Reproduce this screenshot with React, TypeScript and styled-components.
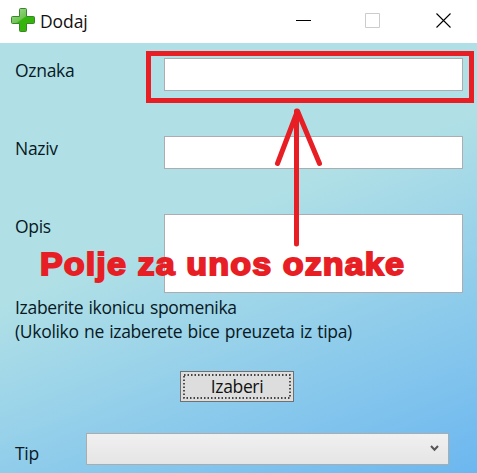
import React from "react";
import styled, { createGlobalStyle } from "styled-components";

const Global = createGlobalStyle`
  body { margin: 0; overflow: hidden; }
  * { box-sizing: border-box; }
`;
const Window = styled.div`
  position: relative;
  width: 477px;
  height: 473px;
  display: flex;
  flex-direction: column;
  overflow: hidden;
  background: #fff;
  font-family: "Open Sans", "Noto Sans", sans-serif;
  font-size: 17.5px;
  line-height: 24px;
  color: #08191f;
`;
const TitleBar = styled.header`
  display: flex;
  align-items: center;
  height: 43px;
  flex: none;
  padding: 0 26px 3px 10px;
  background: #fff;
`;
const Title = styled.h1`
  margin: 2px 0 0 4px;
  flex: 1;
  font-size: 17.5px;
  font-weight: 400;
  letter-spacing: -0.1px;
  color: #111;
`;
const Controls = styled.div`
  display: flex;
  gap: 54px;
`;
const Form = styled.main`
  flex: 1;
  display: flex;
  flex-direction: column;
  padding: 15px 14px 0 15px;
  background: linear-gradient(158deg, #b0e0e6 0%, #b0e0e6 42%, #6cb7f0 100%);
`;
const Row = styled.label<{ $h: number }>`
  display: flex;
  height: ${(p) => p.$h}px;
  flex: none;
`;
const Label = styled.span<{ $w: number }>`
  width: ${(p) => p.$w}px;
  letter-spacing: -0.3px;
`;
const Input = styled.input`
  width: 299px;
  height: 33px;
  border: 1px solid #abadb3;
  background: #fff;
`;
const TextArea = styled.textarea`
  width: 299px;
  height: 79px;
  border: 1px solid #abadb3;
  background: #fff;
  resize: none;
`;
const Hint = styled.p`
  margin: 0;
  height: 76px;
  letter-spacing: -0.31px;
  word-spacing: 1px;
  white-space: nowrap;
`;
const Button = styled.button`
  position: relative;
  width: 114px;
  height: 31px;
  margin-left: 165px;
  padding: 0 0 1px;
  border: 1px solid #707070;
  background: #ddd;
  font: inherit;
  color: #111;
  letter-spacing: -0.35px;
`;
const FocusRing = styled.svg`
  position: absolute;
  inset: 0;
`;
const TypeRow = styled.div`
  display: flex;
  margin-top: 31px;
`;
const Select = styled.div`
  display: flex;
  align-items: center;
  justify-content: flex-end;
  width: 363px;
  height: 32px;
  padding: 0 9px 2px 0;
  border: 1px solid #acacac;
  background: linear-gradient(#f0f0f0, #e5e5e5);
`;
const TypeLabel = styled(Label)`
  padding-top: 8px;
`;
const Highlight = styled.div`
  position: absolute;
  left: 146px;
  top: 51px;
  width: 328px;
  height: 52px;
  border: 5px solid #e81e25;
`;
const Arrow = styled.svg`
  position: absolute;
  left: 270px;
  top: 103px;
`;
const Callout = styled.div`
  position: absolute;
  left: 40px;
  top: 245px;
  font: 700 31px/40px "Liberation Sans", Arial, sans-serif;
  letter-spacing: 1px;
  color: #e81e25;
  -webkit-text-stroke: 1.8px #e81e25;
  transform: scaleX(1.1);
  transform-origin: left;
  white-space: nowrap;
`;

const Plus = () => (
  <svg width="26" height="26" viewBox="0 0 26 26">
    <defs>
      <linearGradient id="plus" x1="0" y1="0" x2="0.7" y2="1">
        <stop offset="0" stopColor="#a9dc9f" />
        <stop offset="0.5" stopColor="#6fc453" />
        <stop offset="0.55" stopColor="#35b40c" />
        <stop offset="1" stopColor="#35b408" />
      </linearGradient>
    </defs>
    <path d="M10.5 1.5h5q1 0 1 1v7h7q1 0 1 1v5q0 1-1 1h-7v7q0 1-1 1h-5q-1 0-1-1v-7h-7q-1 0-1-1v-5q0-1 1-1h7v-7q0-1 1-1Z" fill="url(#plus)" stroke="#39852c" />
  </svg>
);

export default function App() {
  return (
    <Window>
      <Global />
      <TitleBar>
        <Plus />
        <Title>Dodaj</Title>
        <Controls>
          <svg width="15" height="15"><path d="M0 7.5h15" stroke="#000" /></svg>
          <svg width="17" height="15"><path d="M.5.5h14v14H.5Z" fill="none" stroke="#ccc" /></svg>
          <svg width="15" height="15"><path d="m.5.5 14 14m0-14-14 14" stroke="#000" strokeWidth="1.1" /></svg>
        </Controls>
      </TitleBar>
      <Form>
        <Row $h={78}><Label $w={149}>Oznaka</Label><Input /></Row>
        <Row $h={78}><Label $w={149}>Naziv</Label><Input /></Row>
        <Row $h={81}><Label $w={149}>Opis</Label><TextArea /></Row>
        <Hint>Izaberite ikonicu spomenika<br />(Ukoliko ne izaberete bice preuzeta iz tipa)</Hint>
        <Button>
          Izaberi
          <FocusRing width="112" height="29">
            <rect x="3" y="3" width="106" height="23" fill="none" stroke="#111" strokeWidth="1.4" strokeDasharray="1.5 2" />
          </FocusRing>
        </Button>
        <TypeRow>
          <TypeLabel $w={71}>Tip</TypeLabel>
          <Select>
            <svg width="9" height="7"><path d="m1 1 3.5 3.7L8 1" fill="none" stroke="#555" strokeWidth="2" /></svg>
          </Select>
        </TypeRow>
      </Form>
      <Highlight />
      <Arrow width="56" height="145">
        <path d="M26.5 8v133M7.5 60.5 27.5 8 49.5 60.5" fill="none" stroke="#e81e25" strokeWidth="5" strokeLinecap="round" strokeLinejoin="round" />
      </Arrow>
      <Callout>Polje za unos oznake</Callout>
    </Window>
  );
}
